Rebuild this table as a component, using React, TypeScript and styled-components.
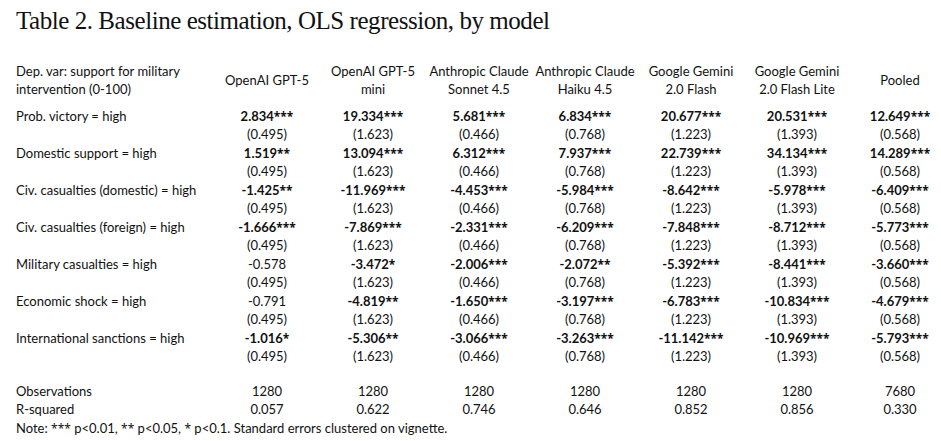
import React from "react";
import styled, { createGlobalStyle } from "styled-components";

const GlobalStyle = createGlobalStyle`
  html, body {
    margin: 0;
    padding: 0;
    background: #ffffff;
    overflow: hidden;
  }
`;

const S = {
  Page: styled.div`
    padding: 6px 0 0 16px;
    color: #111111;
    font-family: Lato, "Noto Sans", sans-serif;
  `,
  Title: styled.h1`
    margin: 0;
    font-family: "Liberation Serif", serif;
    font-weight: normal;
    font-size: 25px;
    letter-spacing: -0.45px;
    line-height: 30px;
  `,
  Table: styled.div`
    display: grid;
    grid-template-columns: 198px repeat(6, 106px) 100px;
    font-size: 13px;
  `,
  Head: styled.div<{ $label?: boolean }>`
    display: flex;
    align-items: center;
    justify-content: ${(p) => (p.$label ? "flex-start" : "center")};
    text-align: ${(p) => (p.$label ? "left" : "center")};
    line-height: 17.5px;
    height: 35px;
    margin: 27px 0 8.5px;
  `,
  Label: styled.div<{ $gap?: boolean }>`
    height: 18.5px;
    line-height: 18.5px;
    white-space: nowrap;
    margin-top: ${(p) => (p.$gap ? "16px" : "0")};
  `,
  Cell: styled.div<{ $bold?: boolean; $gap?: boolean }>`
    height: 18.5px;
    line-height: 18.5px;
    text-align: center;
    white-space: nowrap;
    font-weight: ${(p) => (p.$bold ? 700 : 400)};
    margin-top: ${(p) => (p.$gap ? "16px" : "0")};
  `,
  Stars: styled.span`
    font-family: "Noto Sans", sans-serif;
    font-size: 12px;
    line-height: 0;
  `,
  Note: styled.div`
    height: 19px;
    font-size: 13px;
    line-height: 19px;
  `,
};

const models = [
  ["OpenAI GPT-5"],
  ["OpenAI GPT-5", "mini"],
  ["Anthropic Claude", "Sonnet 4.5"],
  ["Anthropic Claude", "Haiku 4.5"],
  ["Google Gemini", "2.0 Flash"],
  ["Google Gemini", "2.0 Flash Lite"],
  ["Pooled"],
];

const ses = ["(0.495)", "(1.623)", "(0.466)", "(0.768)", "(1.223)", "(1.393)", "(0.568)"];

type Row = { label: string; coefs: string[] };

const rows: Row[] = [
  {
    label: "Prob. victory = high",
    coefs: ["2.834***", "19.334***", "5.681***", "6.834***", "20.677***", "20.531***", "12.649***"],
  },
  {
    label: "Domestic support = high",
    coefs: ["1.519**", "13.094***", "6.312***", "7.937***", "22.739***", "34.134***", "14.289***"],
  },
  {
    label: "Civ. casualties (domestic) = high",
    coefs: ["-1.425**", "-11.969***", "-4.453***", "-5.984***", "-8.642***", "-5.978***", "-6.409***"],
  },
  {
    label: "Civ. casualties (foreign) = high",
    coefs: ["-1.666***", "-7.869***", "-2.331***", "-6.209***", "-7.848***", "-8.712***", "-5.773***"],
  },
  {
    label: "Military casualties = high",
    coefs: ["-0.578", "-3.472*", "-2.006***", "-2.072**", "-5.392***", "-8.441***", "-3.660***"],
  },
  {
    label: "Economic shock = high",
    coefs: ["-0.791", "-4.819**", "-1.650***", "-3.197***", "-6.783***", "-10.834***", "-4.679***"],
  },
  {
    label: "International sanctions = high",
    coefs: ["-1.016*", "-5.306**", "-3.066***", "-3.263***", "-11.142***", "-10.969***", "-5.793***"],
  },
];

const observations = ["1280", "1280", "1280", "1280", "1280", "1280", "7680"];
const rsquared = ["0.057", "0.622", "0.746", "0.646", "0.852", "0.856", "0.330"];

// split "2.834***" into the number and its significance stars
function Coef({ value }: { value: string }) {
  const stars = value.match(/\*+$/)?.[0] ?? "";
  const num = stars ? value.slice(0, -stars.length) : value;
  return (
    <S.Cell $bold={!!stars}>
      {num}
      {stars && <S.Stars>{stars}</S.Stars>}
    </S.Cell>
  );
}

export default function App() {
  return (
    <>
      <GlobalStyle />
      <S.Page>
        <S.Title>Table 2. Baseline estimation, OLS regression, by model</S.Title>
        <S.Table>
          <S.Head $label>
            Dep. var: support for military
            <br />
            intervention (0-100)
          </S.Head>
          {models.map((m, i) => (
            <S.Head key={i}>
              <div>
                {m.map((line, j) => (
                  <div key={j}>{line}</div>
                ))}
              </div>
            </S.Head>
          ))}

          {rows.map((row) => (
            <React.Fragment key={row.label}>
              <S.Label>{row.label}</S.Label>
              {row.coefs.map((c, i) => (
                <Coef key={i} value={c} />
              ))}
              <S.Label />
              {ses.map((s, i) => (
                <S.Cell key={i}>{s}</S.Cell>
              ))}
            </React.Fragment>
          ))}

          <S.Label $gap>Observations</S.Label>
          {observations.map((o, i) => (
            <S.Cell key={i} $gap>
              {o}
            </S.Cell>
          ))}
          <S.Label>R-squared</S.Label>
          {rsquared.map((r, i) => (
            <S.Cell key={i}>{r}</S.Cell>
          ))}
        </S.Table>
        <S.Note>
          Note: <S.Stars>***</S.Stars> p&lt;0.01, <S.Stars>**</S.Stars> p&lt;0.05, <S.Stars>*</S.Stars> p&lt;0.1.
          Standard errors clustered on vignette.
        </S.Note>
      </S.Page>
    </>
  );
}
